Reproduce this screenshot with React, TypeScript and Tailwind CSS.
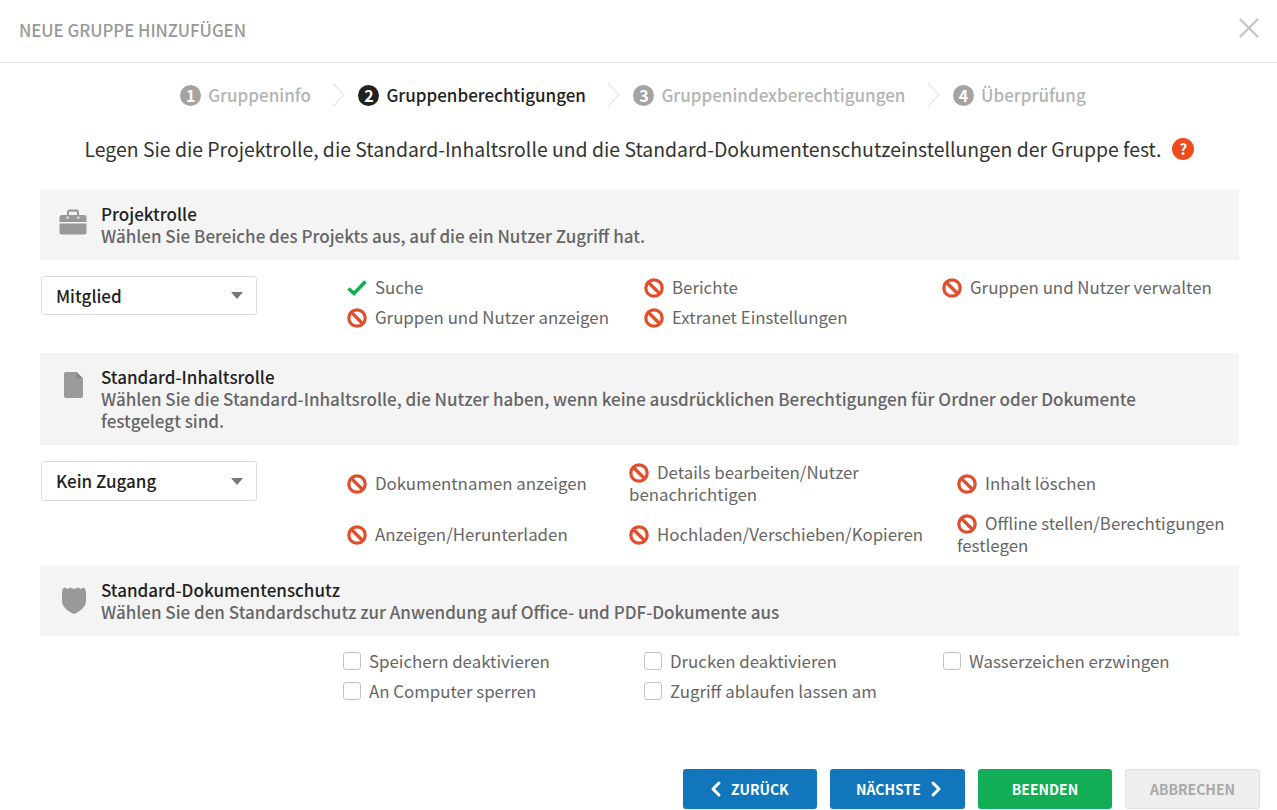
import { ChevronLeft, ChevronRight, X } from "lucide-react";
import type { ReactNode } from "react";

const FONT = "font-['Source_Sans_Pro','Noto_Sans_CJK_SC','Noto_Sans',sans-serif]";

const BanIcon = () => (
  <svg width="20" height="20" viewBox="0 0 20 20" className="inline-block shrink-0 align-[-4px]">
    <circle cx="10" cy="10" r="8.200" fill="none" stroke="#e04e2c" strokeWidth="3.200" />
    <path d="M5 5l10 10" stroke="#e04e2c" strokeWidth="3.200" />
  </svg>
);

const CheckIcon = () => (
  <svg width="20" height="20" viewBox="0 0 20 20" className="inline-block shrink-0 align-[-4px]">
    <path d="M1.500 10.500l5.500 5L18.500 3.500" fill="none" stroke="#18a957" strokeWidth="3.600" />
  </svg>
);

const BriefcaseIcon = () => (
  <svg width="28" height="26" viewBox="0 0 28 26" fill="#999999">
    <path d="M8 7V3C8 1.600 9 .5 10.400 .5h7.200C19 .5 20 1.600 20 3v4h-2V3.500c0-.5-.3-.8-.8-.8h-6.400c-.5 0-.8.3-.8.8V7z" />
    <path d="M.5 8C.5 7 1.300 6 2.500 6h23c1.200 0 2 1 2 2v5H.5z" />
    <path d="M.5 14.500h27V23.500c0 1.200-.8 2-2 2h-23c-1.200 0-2-.8-2-2z" />
    <path d="M7.500 7.500h2.500v2H7.500zM18 7.500h2.500v2H18z" fill="#e2e2e2" />
  </svg>
);

const FileIcon = () => (
  <svg width="19" height="26" viewBox="0 0 19 26" className="ml-[5px]">
    <path d="M2 0H12.500L19 6.500V24c0 1.100-.9 2-2 2H2c-1.100 0-2-.9-2-2V2C0 .9.900 0 2 0z" fill="#9a9a9a" />
    <path d="M12.500 0L19 6.500h-5c-.8 0-1.500-.7-1.500-1.500z" fill="#858585" />
  </svg>
);

const ShieldIcon = () => (
  <svg width="24" height="27" viewBox="0 0 24 27" fill="#999999" className="mt-[2px] ml-[3px]">
    <path d="M1 1.500L3 .5l2.500 1.500L8 .5l4 1.500 4-1.500L18.500 2 21 .5l2 1c.6 1.500 1 3 1 5v7.500c0 6-6 10.500-12 13C6 24.500 0 20 0 14V6.500c0-2 .4-3.500 1-5z" />
  </svg>
);

const Circle = ({ n, active }: { n: number; active?: boolean }) => (
  <span
    className={`flex h-[21px] w-[21px] shrink-0 items-center justify-center rounded-full text-[16px] leading-none font-bold text-white ${active ? "bg-[#222222]" : "bg-[#a3a3a3]"}`}
  >
    {n}
  </span>
);

const Sep = () => (
  <svg width="13" height="24" viewBox="0 0 13 24" className="mr-[13px] ml-[21.500px] shrink-0">
    <path d="M1 .5l11 11.500L1 23.500" fill="none" stroke="#e6e6e6" strokeWidth="1.200" />
  </svg>
);

const Step = ({ n, label, active }: { n: number; label: string; active?: boolean }) => (
  <div className="flex items-center gap-[7px]">
    <Circle n={n} active={active} />
    <span className={`text-[17px] leading-6 font-medium ${active ? "text-[#222222]" : "text-[#b3b3b3]"}`}>
      {label}
    </span>
  </div>
);

const SectionHead = ({ icon, title, children }: { icon: ReactNode; title: string; children: ReactNode }) => (
  <div className="flex bg-[#f4f4f4] py-[13px] pl-[19px] pr-[60px]">
    <div className="flex w-[42px] shrink-0 justify-start pt-[6px]">{icon}</div>
    <div className="text-[17px] leading-[22px] font-medium">
      <div className="text-[#222222]">{title}</div>
      <div className="text-[#666666]">{children}</div>
    </div>
  </div>
);

const Select = ({ label, tall }: { label: string; tall?: boolean }) => (
  <div
    className={`ml-px flex w-[216px] items-center justify-between rounded-[3px] border border-[#dcdcdc] bg-white pl-[14px] pr-[13px] text-[17px] font-medium text-[#222222] ${tall ? "h-[40px]" : "h-[39px]"}`}
  >
    <span>{label}</span>
    <span className="h-0 w-0 border-x-[6px] border-t-[7px] border-x-transparent border-t-[#777777]" />
  </div>
);

const Perm = ({ label, ok }: { label: string; ok?: boolean }) => (
  <div className="text-[16.850px] leading-[22px] text-[#666666]">
    {ok ? <CheckIcon /> : <BanIcon />}
    <span className="ml-[8px]">{label}</span>
  </div>
);

const Check = ({ label }: { label: string }) => (
  <div className="flex items-center gap-[8px] text-[16.850px] leading-[22px] text-[#666666]">
    <span className="h-[18px] w-[18px] shrink-0 rounded-[3px] border border-[#c4c4c4] bg-white" />
    <span>{label}</span>
  </div>
);

export default function App() {
  return (
    <div className={`${FONT} flex h-[810px] w-[1277px] flex-col overflow-hidden bg-white`}>
      <div className="flex h-[63px] shrink-0 items-center justify-between border-b border-[#e2e2e2] pl-[19px] pr-[11px]">
        <h1 className="text-[16.750px] font-medium text-[#999999] uppercase">Neue Gruppe hinzufügen</h1>
        <X size={34} strokeWidth={1.600} className="mb-[6px] text-[#c4c4c4]" />
      </div>

      <div className="mt-[20px] flex items-center justify-center pr-[11px]">
        <Step n={1} label="Gruppeninfo" />
        <Sep />
        <Step n={2} label="Gruppenberechtigungen" active />
        <Sep />
        <Step n={3} label="Gruppenindexberechtigungen" />
        <Sep />
        <Step n={4} label="Überprüfung" />
      </div>

      <div className="mt-[28px] flex items-center justify-center gap-[11px] pl-[2px] text-[19.400px] leading-7 text-[#333333]">
        <span>Legen Sie die Projektrolle, die Standard-Inhaltsrolle und die Standard-Dokumentenschutzeinstellungen der Gruppe fest.</span>
        <span className="flex h-[22px] w-[22px] items-center justify-center rounded-full bg-[#ee4b1f] text-[15px] font-bold text-white">?</span>
      </div>

      <div className="mt-[27px] ml-[40px] flex w-[1199px] flex-col">
        <SectionHead icon={<BriefcaseIcon />} title="Projektrolle">
          Wählen Sie Bereiche des Projekts aus, auf die ein Nutzer Zugriff hat.
        </SectionHead>
        <div className="flex h-[93px] pt-[16px]">
          <div className="w-[307px] shrink-0">
            <Select label="Mitglied" />
          </div>
          <div className="grid flex-1 grid-cols-[297px_298px_1fr] content-start gap-y-[8px]">
            <Perm label="Suche" ok />
            <Perm label="Berichte" />
            <Perm label="Gruppen und Nutzer verwalten" />
            <Perm label="Gruppen und Nutzer anzeigen" />
            <Perm label="Extranet Einstellungen" />
          </div>
        </div>

        <SectionHead icon={<FileIcon />} title="Standard-Inhaltsrolle">
          Wählen Sie die Standard-Inhaltsrolle, die Nutzer haben, wenn keine ausdrücklichen Berechtigungen für Ordner oder Dokumente festgelegt sind.
        </SectionHead>
        <div className="flex h-[121px] pt-[16px]">
          <div className="w-[307px] shrink-0">
            <Select label="Kein Zugang" tall />
          </div>
          <div className="grid flex-1 grid-cols-[282px_328px_1fr] grid-rows-[44px_44px] content-start items-center gap-y-[7px]">
            <Perm label="Dokumentnamen anzeigen" />
            <Perm label="Details bearbeiten/Nutzer benachrichtigen" />
            <Perm label="Inhalt löschen" />
            <Perm label="Anzeigen/Herunterladen" />
            <Perm label="Hochladen/Verschieben/Kopieren" />
            <Perm label="Offline stellen/Berechtigungen festlegen" />
          </div>
        </div>

        <SectionHead icon={<ShieldIcon />} title="Standard-Dokumentenschutz">
          Wählen Sie den Standardschutz zur Anwendung auf Office- und PDF-Dokumente aus
        </SectionHead>
        <div className="grid grid-cols-[301px_299px_1fr] gap-y-[8px] pt-[14px] pl-[303px]">
          <Check label="Speichern deaktivieren" />
          <Check label="Drucken deaktivieren" />
          <Check label="Wasserzeichen erzwingen" />
          <Check label="An Computer sperren" />
          <Check label="Zugriff ablaufen lassen am" />
        </div>
      </div>

      <div className="mt-auto mb-px flex justify-end gap-[13px] pr-[17px] text-[14px] font-bold">
        <button className="flex h-[40px] w-[134px] items-center gap-[3px] rounded-[3px] bg-[#1176bc] pl-[21px] text-white uppercase">
          <ChevronLeft size={24} strokeWidth={3} />
          Zurück
        </button>
        <button className="flex h-[40px] w-[135px] items-center gap-[3px] rounded-[3px] bg-[#1176bc] pl-[26px] text-white uppercase">
          Nächste
          <ChevronRight size={24} strokeWidth={3} />
        </button>
        <button className="h-[40px] w-[134px] rounded-[3px] bg-[#12ad55] text-white uppercase">Beenden</button>
        <button className="h-[40px] w-[135px] rounded-[3px] border border-[#e0e0e0] bg-[#eeeeee] text-[#a8a8a8] uppercase">Abbrechen</button>
      </div>
    </div>
  );
}
